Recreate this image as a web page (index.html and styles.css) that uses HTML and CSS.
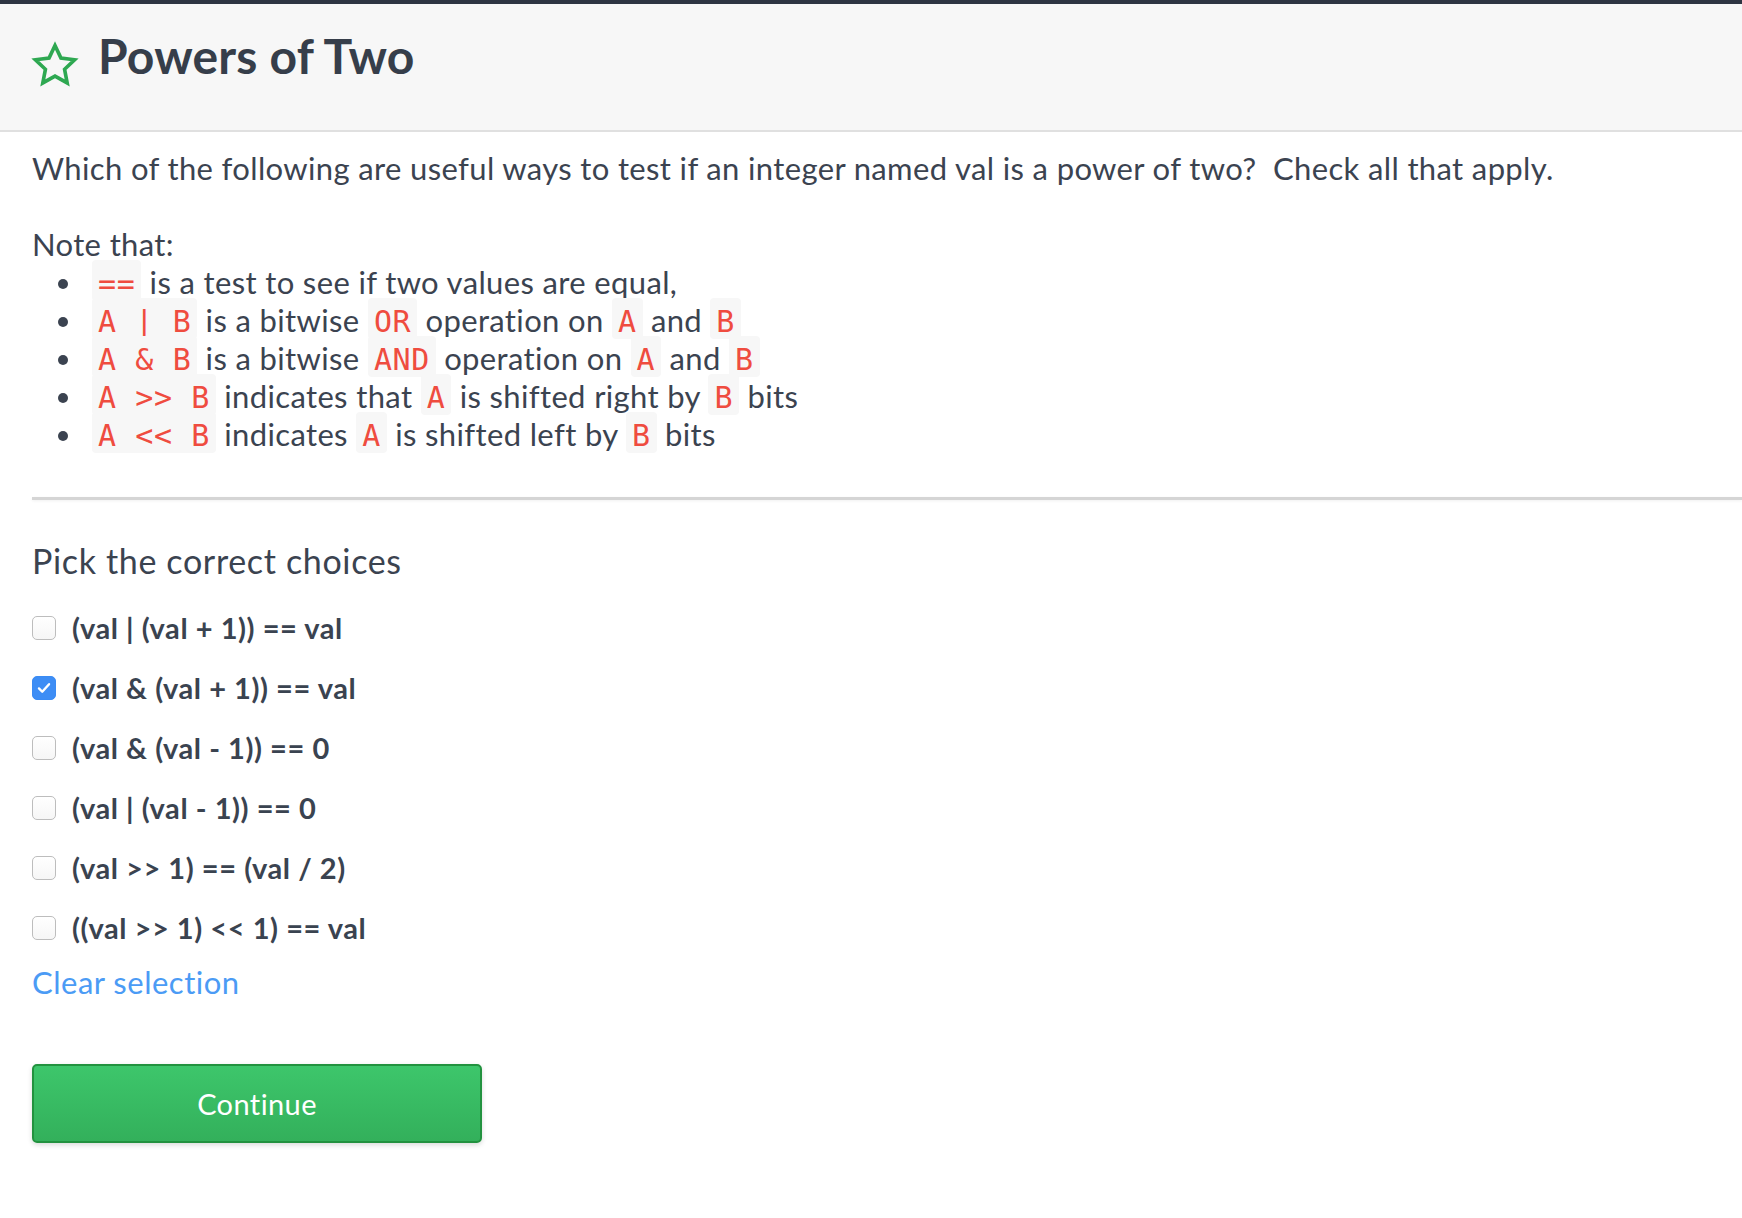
FILE: index.html
```html
<!DOCTYPE html>
<html lang="en">
<head>
<meta charset="utf-8">
<title>Powers of Two</title>
<link rel="stylesheet" href="styles.css">
</head>
<body>
<header class="header">
  <svg class="star" viewBox="0 0 24 24" aria-hidden="true">
    <path d="M12 2.6l2.85 6.05 6.55.85-4.8 4.55 1.25 6.55L12 17.35 6.15 20.6l1.25-6.55L2.6 9.5l6.55-.85z"/>
  </svg>
  <h1 class="title">Powers of Two</h1>
</header>
<main class="content">
  <section class="prompt">
    <p class="question">Which of the following are useful ways to test if an integer named val is a power of two?&nbsp; Check all that apply.<br><br>Note that:</p>
    <ul class="notes">
      <li><code>==</code> is a test to see if two values are equal,</li>
      <li><code>A | B</code> is a bitwise <code>OR</code> operation on <code>A</code> and <code>B</code></li>
      <li><code>A &amp; B</code> is a bitwise <code>AND</code> operation on <code>A</code> and <code>B</code></li>
      <li><code>A &gt;&gt; B</code> indicates that <code>A</code> is shifted right by <code>B</code> bits</li>
      <li><code>A &lt;&lt; B</code> indicates <code>A</code> is shifted left by <code>B</code> bits</li>
    </ul>
  </section>
  <hr class="divider">
  <h2 class="subtitle">Pick the correct choices</h2>
  <div class="choices">
    <label class="choice"><span class="box"></span><span class="label">(val | (val + 1)) == val</span></label>
    <label class="choice"><span class="box checked"><svg viewBox="0 0 24 24" aria-hidden="true"><path d="M6.5 12.5l3.6 3.6 7.4-8.2"/></svg></span><span class="label">(val &amp; (val + 1)) == val</span></label>
    <label class="choice"><span class="box"></span><span class="label">(val &amp; (val - 1)) == 0</span></label>
    <label class="choice"><span class="box"></span><span class="label">(val | (val - 1)) == 0</span></label>
    <label class="choice"><span class="box"></span><span class="label">(val &gt;&gt; 1) == (val / 2)</span></label>
    <label class="choice"><span class="box"></span><span class="label">((val &gt;&gt; 1) &lt;&lt; 1) == val</span></label>
  </div>
  <a class="clear" href="#">Clear selection</a>
  <button class="continue" type="button">Continue</button>
</main>
</body>
</html>
```

FILE: styles.css
```css
* { box-sizing: border-box; }

html, body {
  margin: 0;
  padding: 0;
  background: #ffffff;
}

body {
  font-family: Lato, "Open Sans", "Liberation Sans", sans-serif;
  color: #3b4350;
}

.header {
  display: flex;
  align-items: flex-start;
  height: 132px;
  padding: 0 32px;
  background: #f7f7f7;
  border-top: 4px solid #2e3542;
  border-bottom: 2px solid #e0e0e0;
}

.star {
  width: 50px;
  height: 50px;
  margin: 36px 0 0 -2px;
  flex: none;
}

.star path {
  fill: none;
  stroke: #2ea851;
  stroke-width: 1.75;
  stroke-linejoin: miter;
}

.title {
  margin: 23px 0 0 18px;
  font-size: 48px;
  line-height: 58px;
  font-weight: 700;
  color: #363e4a;
  letter-spacing: 0.2px;
}

.content {
  padding: 17px 0 80px 32px;
}

.question {
  margin: 0;
  font-size: 31px;
  line-height: 38px;
  letter-spacing: 0.36px;
}

.notes {
  margin: 0;
  padding-left: 53px;
  font-size: 31px;
  line-height: 38px;
  letter-spacing: 0.36px;
}

.notes li {
  padding-left: 7px;
}

.notes code {
  font-family: "DejaVu Sans Mono", "Liberation Mono", monospace;
  font-size: 30px;
  line-height: 1;
  letter-spacing: 0.6px;
  color: #ef4c3f;
  background: #f7f7f7;
  border-radius: 4px;
  padding: 6px 6px 0;
}

.divider {
  margin: 44px 0 0;
  border: 0;
  height: 3px;
  background: #d5d5d5;
  box-shadow: 0 1px 3px rgba(0, 0, 0, 0.06);
}

.subtitle {
  margin: 41px 0 0;
  font-size: 34px;
  line-height: 40px;
  font-weight: 400;
  color: #3b4350;
  letter-spacing: 0.65px;
}

.choices {
  margin-top: 17px;
  display: flex;
  flex-direction: column;
}

.choice {
  display: flex;
  align-items: center;
  gap: 16px;
  height: 60px;
}

.box {
  flex: none;
  width: 24px;
  height: 24px;
  border: 1px solid #bdbdbd;
  border-radius: 5px;
  background: linear-gradient(#ffffff, #f6f6f6);
  display: flex;
  align-items: center;
  justify-content: center;
}

.box.checked {
  border-color: #3a8bf4;
  background: #3d8df5;
}

.box.checked svg {
  width: 22px;
  height: 22px;
}

.box.checked path {
  fill: none;
  stroke: #ffffff;
  stroke-width: 2.6;
  stroke-linecap: round;
  stroke-linejoin: round;
}

.label {
  font-size: 29px;
  line-height: 60px;
  font-weight: 700;
  color: #3a4350;
  letter-spacing: 0.55px;
}

.clear {
  display: block;
  width: max-content;
  margin-top: 5px;
  font-size: 31px;
  line-height: 38px;
  color: #4b9bf5;
  text-decoration: none;
  letter-spacing: 0.5px;
}

.continue {
  display: block;
  margin-top: 63px;
  width: 450px;
  height: 79px;
  border: 2px solid #22923f;
  border-radius: 5px;
  background: linear-gradient(#3dc66b, #33b05b);
  box-shadow: 0 2px 5px rgba(0, 0, 0, 0.15);
  color: #ffffff;
  font-family: Lato, "Open Sans", sans-serif;
  font-size: 29px;
  letter-spacing: 0.4px;
  cursor: pointer;
}
```
